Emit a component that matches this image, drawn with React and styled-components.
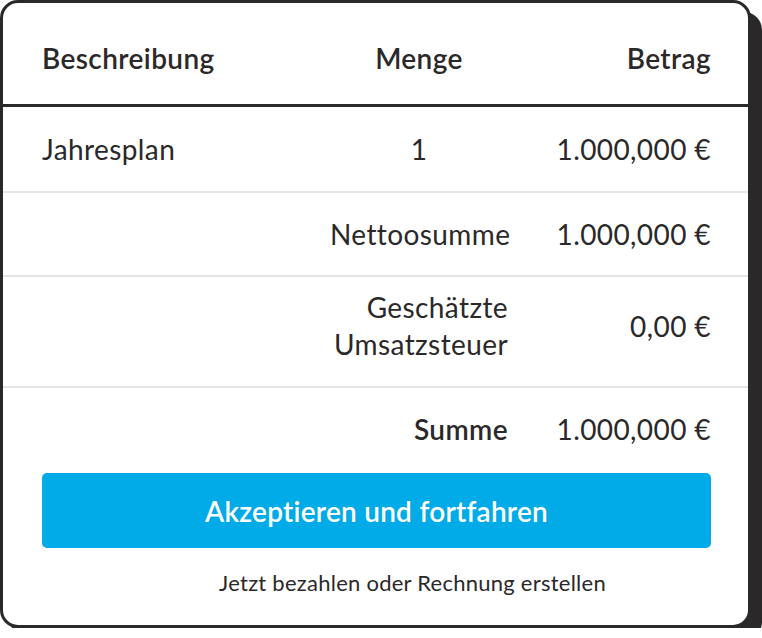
import React from "react";
import styled, { createGlobalStyle } from "styled-components";

const Global = createGlobalStyle`
  html, body { margin: 0; padding: 0; background: #ffffff; }
  body { font-family: "Lato", "Liberation Sans", sans-serif; color: #2b2829; }
  * { box-sizing: border-box; }
`;

const Card = styled.div`
  width: 751px;
  background: #ffffff;
  border: 3px solid #2b2829;
  border-radius: 18px;
  box-shadow: 11px 12px 0 #2b2829;
  overflow: hidden;
`;

const Row = styled.div`
  display: grid;
  grid-template-columns: 1fr 178px 203px;
  align-items: center;
  padding: ${(p) => p.$pt}px 37px ${(p) => p.$pb}px 39px;
  border-bottom: ${(p) => (p.$head ? "3px solid #2b2829" : p.$last ? "none" : "2px solid #e4e4e4")};
  font-size: 28px;
  letter-spacing: 0.4px;
  line-height: ${(p) => (p.$lh ? p.$lh : 36)}px;
  font-weight: ${(p) => (p.$head ? 600 : 400)};
`;

const Cell = styled.div`
  text-align: ${(p) => p.$align || "left"};
  font-weight: ${(p) => (p.$bold ? 600 : "inherit")};
  white-space: ${(p) => (p.$nowrap ? "nowrap" : "normal")};
`;

const Actions = styled.div`
  padding: 0 37px 28px 39px;
  display: flex;
  flex-direction: column;
`;

const PrimaryButton = styled.button`
  height: 75px;
  width: 100%;
  border: none;
  border-radius: 5px;
  background: #00abe7;
  color: #ffffff;
  font-family: "Lato", "Liberation Sans", sans-serif;
  font-size: 28px;
  letter-spacing: 0.25px;
  font-weight: 600;
  cursor: pointer;
`;

const Note = styled.div`
  margin-top: 20px;
  padding-left: 72px;
  text-align: center;
  font-size: 22px;
  letter-spacing: 0.25px;
  line-height: 29px;
  color: #2b2829;
`;

export default function App() {
  return (
    <>
      <Global />
      <Card>
        <Row $head $pt={37} $pb={28}>
          <Cell>Beschreibung</Cell>
          <Cell $align="center">Menge</Cell>
          <Cell $align="right">Betrag</Cell>
        </Row>
        <Row $pt={24} $pb={24}>
          <Cell>Jahresplan</Cell>
          <Cell $align="center">1</Cell>
          <Cell $align="right" $nowrap>1.000,000 €</Cell>
        </Row>
        <Row $pt={23} $pb={23}>
          <Cell />
          <Cell $align="right">Nettoosumme</Cell>
          <Cell $align="right" $nowrap>1.000,000 €</Cell>
        </Row>
        <Row $pt={12} $pb={23} $lh={37}>
          <Cell />
          <Cell $align="right">Geschätzte Umsatzsteuer</Cell>
          <Cell $align="right" $nowrap>0,00 €</Cell>
        </Row>
        <Row $last $pt={23} $pb={26}>
          <Cell />
          <Cell $align="right" $bold>Summe</Cell>
          <Cell $align="right" $nowrap>1.000,000 €</Cell>
        </Row>
        <Actions>
          <PrimaryButton>Akzeptieren und fortfahren</PrimaryButton>
          <Note>Jetzt bezahlen oder Rechnung erstellen</Note>
        </Actions>
      </Card>
    </>
  );
}
